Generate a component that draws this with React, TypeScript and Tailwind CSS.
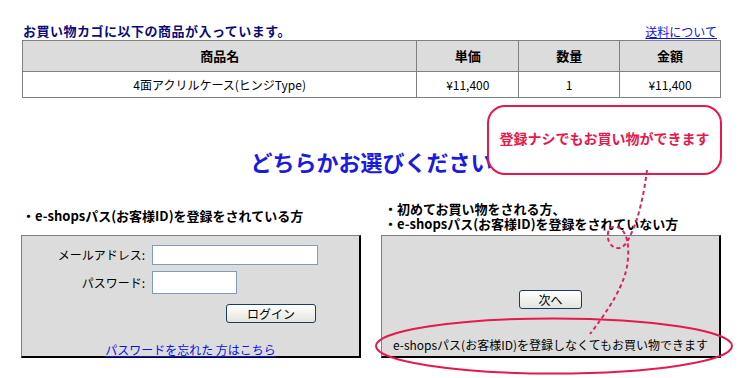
import React from "react";

const jp = { fontFamily: '"Noto Sans CJK JP", "Noto Sans", sans-serif' };

function XpButton({ children, w }: { children: React.ReactNode; w: string }) {
  return (
    <button
      className={`${w} h-[19px] rounded-[3px] border border-[#1c3a66] bg-gradient-to-b from-white to-[#e4e4de] text-[12px] leading-[17px] text-black`}
    >
      {children}
    </button>
  );
}

export default function App() {
  return (
    <div
      className="relative w-[743px] h-[378px] overflow-hidden bg-white text-black"
      style={jp}
    >
      {/* cart header */}
      <div className="pl-[22px] pr-[22px] pt-[22px]">
        <div className="flex h-[17px] items-end justify-between">
          <div className="pl-[1px] text-[13px] font-bold leading-[17px] tracking-[0.5px] text-[#0c0c78]">
            お買い物カゴに以下の商品が入っています。
          </div>
          <a className="pr-[4px] text-[12px] leading-[15px] text-[#1010e0] underline">
            送料について
          </a>
        </div>
        <table className="mt-[1px] w-[699px] border-collapse border border-[#808080] text-center">
          <thead>
            <tr className="h-[31px] bg-[#dcdcdc] text-[13px] font-bold">
              <th className="w-[395px] border border-[#808080]">商品名</th>
              <th className="w-[102px] border border-[#808080]">単価</th>
              <th className="w-[101px] border border-[#808080]">数量</th>
              <th className="w-[101px] border border-[#808080]">金額</th>
            </tr>
          </thead>
          <tbody>
            <tr className="h-[26px] text-[12px]">
              <td className="border border-[#808080]">4面アクリルケース(ヒンジType)</td>
              <td className="border border-[#808080]">¥11,400</td>
              <td className="border border-[#808080]">1</td>
              <td className="border border-[#808080]">¥11,400</td>
            </tr>
          </tbody>
        </table>

        <div className="mt-[50px] text-center text-[22px] font-bold leading-[26px] text-[#1a1ae0]">
          どちらかお選びください
        </div>
      </div>

      {/* two choices */}
      <div className="mt-[27px] grid grid-cols-[340px_340px] items-end gap-x-[20px] pl-[21px]">
        <div className="flex flex-col">
          <div className="mb-[11px] pl-[1px] text-[13px] font-bold leading-[16px]">
            ・e-shopsパス(お客様ID)を登録をされている方
          </div>
          <div className="flex h-[123px] flex-col border-l border-t border-[#808080] border-r-2 border-b-2 border-r-black border-b-black bg-[#dcdcdc] pt-[9px]">
            <div className="flex items-center">
              <div className="w-[123px] text-right text-[12px]">メールアドレス:</div>
              <div className="ml-[7px] h-[20px] w-[166px] border border-[#7f9db9] bg-white" />
            </div>
            <div className="mt-[6px] flex items-center">
              <div className="w-[123px] text-right text-[12px]">パスワード:</div>
              <div className="ml-[7px] h-[23px] w-[85px] border border-[#7f9db9] bg-white" />
            </div>
            <div className="mt-[6px] pl-[204px]">
              <XpButton w="w-[90px]">ログイン</XpButton>
            </div>
            <div className="mt-[19px] text-center text-[12px] leading-[14px]">
              <a className="text-[#1010e0] underline">パスワードを忘れた 方はこちら</a>
            </div>
          </div>
        </div>

        <div className="flex flex-col">
          <div className="mb-[4px] pl-[3px] text-[13px] font-bold leading-[15px]">
            <div>・初めてお買い物をされる方、</div>
            <div>・e-shopsパス(お客様ID)を登録をされていない方</div>
          </div>
          <div className="flex h-[123px] flex-col items-center border-l border-t border-[#808080] border-r-2 border-b-2 border-r-black border-b-black bg-[#dcdcdc] pt-[54px]">
            <XpButton w="w-[63px]">次へ</XpButton>
            <div className="mt-[29px] text-[12px] leading-[14px]">
              e-shopsパス(お客様ID)を登録しなくてもお買い物できます
            </div>
          </div>
        </div>
      </div>

      {/* callout bubble */}
      <div className="absolute left-[487px] top-[105px] h-[70px] w-[235px] rounded-[18px] border-2 border-[#e5194d] bg-white pt-[20px] text-center text-[14px] font-bold leading-[22px] text-[#e5194d]">
        登録ナシでもお買い物ができます
      </div>

      {/* annotation drawing */}
      <svg
        className="pointer-events-none absolute left-0 top-0"
        width="743"
        height="378"
        viewBox="0 0 743 378"
      >
        <path
          d="M647,170 C644,195 638,220 631,234 C627,244 622,249 617,248 C610,247 607,240 608,233 C609,226 616,225 621,229 C627,234 629,245 628,258 C627,275 620,295 590,334"
          fill="none"
          stroke="#d6285e"
          strokeWidth="2"
          strokeDasharray="4 3"
        />
        <ellipse
          cx="554"
          cy="346"
          rx="178"
          ry="27.5"
          fill="none"
          stroke="#e5194d"
          strokeWidth="2"
        />
      </svg>
    </div>
  );
}
